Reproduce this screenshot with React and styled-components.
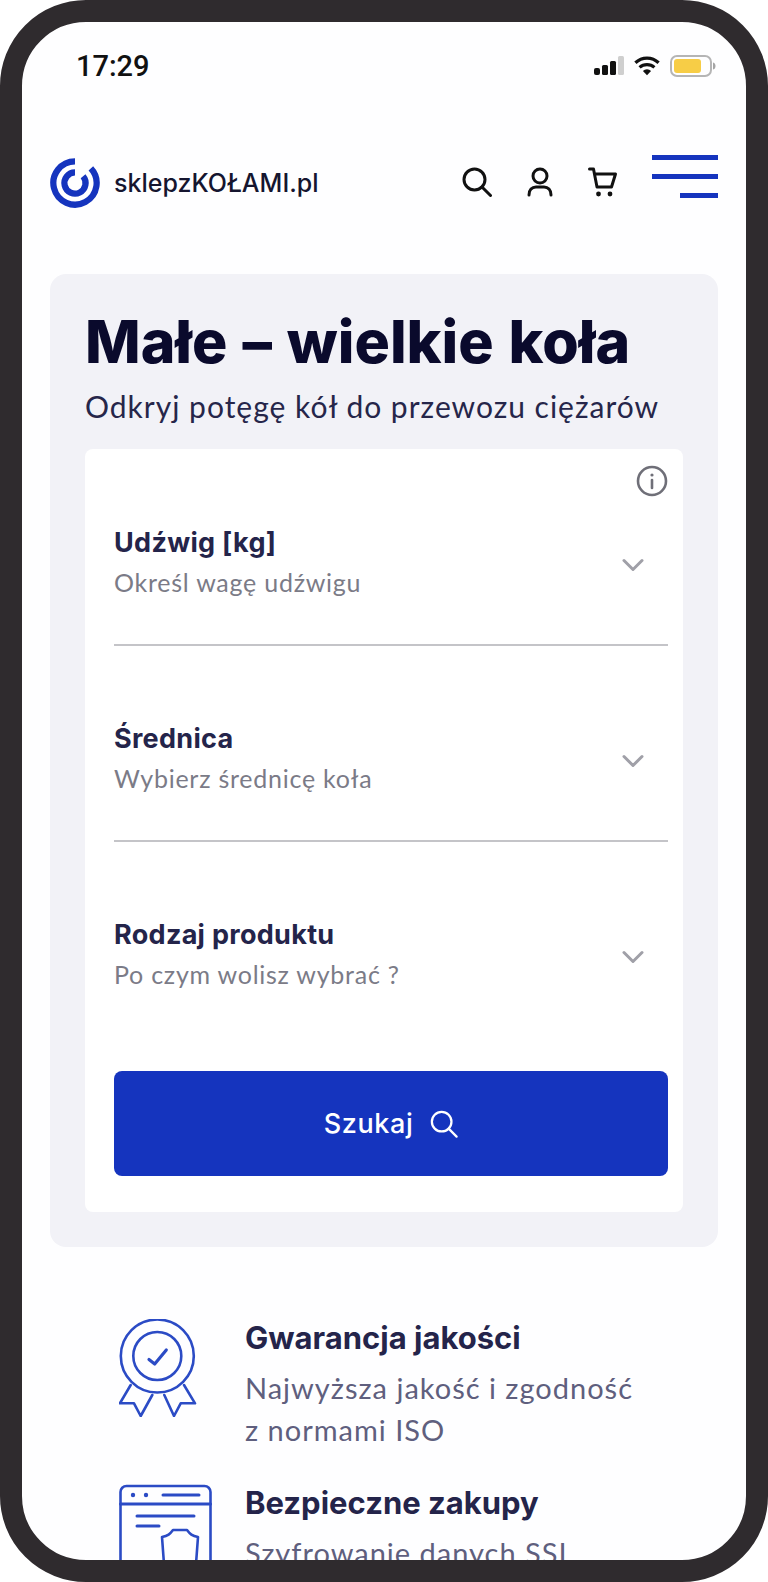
import styled, { createGlobalStyle } from 'styled-components';

const GlobalStyle = createGlobalStyle`
  html, body {
    margin: 0;
    padding: 0;
    background: #fff;
  }
  * {
    box-sizing: border-box;
  }
`;

const Frame = styled.div`
  width: 768px;
  height: 1582px;
  border: 22px solid #2f2b2e;
  border-radius: 86px;
  background: #fefeff;
  overflow: hidden;
  font-family: Inter, "Liberation Sans", sans-serif;
  color: #24244a;
`;

const StatusBar = styled.div`
  height: 88px;
  padding: 22px 30px 0 54px;
  display: flex;
  align-items: flex-start;
  justify-content: space-between;
`;

const Clock = styled.span`
  font-family: Roboto, sans-serif;
  font-size: 29px;
  line-height: 44px;
  font-weight: 500;
  color: #111;
`;

const StatusIcons = styled.div`
  display: flex;
  align-items: center;
  gap: 10px;
  height: 44px;
`;

const Header = styled.header`
  margin-top: 38px;
  height: 70px;
  padding: 0 28px;
  display: flex;
  align-items: center;
`;

const Brand = styled.div`
  display: flex;
  align-items: center;
  gap: 14px;
  font-size: 25px;
  font-weight: 500;
  color: #15152f;
`;

const Tools = styled.div`
  margin-left: auto;
  margin-top: -2px;
  display: flex;
  align-items: center;
  gap: 35px;
`;

const Burger = styled.button`
  margin-left: 34px;
  margin-top: -14px;
  width: 66px;
  padding: 0;
  border: 0;
  background: none;
  display: flex;
  flex-direction: column;
  align-items: flex-end;
  gap: 14px;
`;

const BurgerLine = styled.span`
  display: block;
  height: 5px;
  width: ${p => p.$w}px;
  background: #1534be;
`;

const Hero = styled.section`
  margin: 56px 28px 0;
  padding: 34px 35px 35px;
  background: #f2f2f7;
  border-radius: 16px;
`;

const Title = styled.h1`
  margin: 0;
  font-size: 59px;
  line-height: 68px;
  font-weight: 800;
  word-spacing: 2px;
  color: #0a0a2c;
`;

const Subtitle = styled.p`
  margin: 12px 0 0;
  font-family: Lato, sans-serif;
  font-size: 30px;
  line-height: 36px;
  letter-spacing: 1px;
  color: #26264a;
`;

const Form = styled.div`
  margin-top: 25px;
  padding: 16px 15px 36px 29px;
  background: #fff;
  border-radius: 8px;
`;

const InfoRow = styled.div`
  display: flex;
  justify-content: flex-end;
  height: 32px;
  margin-bottom: 29px;
`;

const Field = styled.div`
  height: ${p => (p.$last ? '119px' : '120px')};
  margin-bottom: ${p => (p.$last ? '34px' : '76px')};
  border-bottom: ${p => (p.$last ? '0' : '2px solid #c4c4c8')};
  display: flex;
  justify-content: space-between;
`;

const FieldTitle = styled.div`
  font-size: 27px;
  line-height: 34px;
  font-weight: 700;
  letter-spacing: 0.3px;
  color: #24244a;
`;

const FieldHint = styled.div`
  margin-top: 5px;
  font-family: Lato, sans-serif;
  font-size: 25px;
  line-height: 34px;
  letter-spacing: 0.75px;
  color: #7b7b87;
`;

const Chevron = styled.div`
  margin: 30px 24px 0 0;
`;

const SearchButton = styled.button`
  width: 100%;
  height: 105px;
  border: 0;
  border-radius: 8px;
  background: #1534be;
  color: #fff;
  display: flex;
  align-items: center;
  justify-content: center;
  gap: 17px;
  font-family: Inter, sans-serif;
  font-size: 27px;
  font-weight: 500;
  letter-spacing: 0.6px;
`;

const Features = styled.section`
  margin-top: 72px;
  padding-left: 97px;
  display: flex;
  flex-direction: column;
  gap: 33px;
`;

const Feature = styled.div`
  display: flex;
  gap: 32px;
`;

const FeatureIcon = styled.div`
  width: 94px;
  flex: none;
`;

const FeatureTitle = styled.h3`
  margin: 0;
  font-size: 31px;
  line-height: 38px;
  font-weight: 700;
  color: #24244a;
`;

const FeatureText = styled.p`
  margin: 10px 0 0;
  font-family: Lato, sans-serif;
  font-size: 29px;
  line-height: 42px;
  letter-spacing: 1px;
  color: #5f5f7e;
`;

const SearchIcon = ({ size = 30, color = '#111', width = 3 }) => (
  <svg width={size} height={size} viewBox="0 0 30 30" fill="none" stroke={color} strokeWidth={width} strokeLinecap="round">
    <circle cx="12.5" cy="12.5" r="10.5" />
    <path d="M20 20l8.5 8.5" />
  </svg>
);

const UserIcon = () => (
  <svg width="26" height="30" viewBox="0 0 26 30" fill="none" stroke="#111" strokeWidth="3" strokeLinecap="round">
    <circle cx="13" cy="9" r="7" />
    <path d="M2 28c0-5 3-8 7-8h8c4 0 7 3 7 8" />
  </svg>
);

const CartIcon = () => (
  <svg width="30" height="30" viewBox="0 0 30 30" fill="none" stroke="#111" strokeWidth="3" strokeLinecap="round" strokeLinejoin="round">
    <path d="M1.5 2h4l3.5 18h14.5l4-13H7" />
    <circle cx="10.5" cy="27" r="2.4" fill="#111" stroke="none" />
    <circle cx="22" cy="27" r="2.4" fill="#111" stroke="none" />
  </svg>
);

const Logo = () => (
  <svg width="50" height="50" viewBox="0 0 52 52" fill="none" stroke="#1534be" strokeWidth="6.5">
    <path d="M26 3.5A22.5 22.5 0 1 0 42.5 10.7" />
    <path d="M26 15A11 11 0 1 0 34.4 18.9" />
  </svg>
);

const Signal = () => (
  <svg width="30" height="20" viewBox="0 0 30 20">
    <rect x="0" y="12" width="6" height="7" rx="2" fill="#111" />
    <rect x="8" y="9" width="6" height="10" rx="1.5" fill="#111" />
    <rect x="16" y="5" width="6" height="14" rx="1.5" fill="#111" />
    <rect x="24" y="0" width="6" height="19" rx="1.5" fill="#cfcfcf" />
  </svg>
);

const Wifi = () => (
  <svg width="26" height="22" viewBox="0 0 28 22" fill="none" stroke="#111" strokeWidth="3.4">
    <path d="M1.5 7.5a18 18 0 0 1 25 0" />
    <path d="M6 12.5a12 12 0 0 1 16 0" />
    <path d="M14 21l-4.4-4.6a6.2 6.2 0 0 1 8.8 0z" fill="#111" stroke="none" />
  </svg>
);

const Battery = () => (
  <svg width="46" height="24" viewBox="0 0 46 24">
    <rect x="1" y="2" width="40" height="20" rx="6" fill="none" stroke="#b5b5b5" strokeWidth="2" />
    <rect x="4" y="5" width="27" height="14" rx="3" fill="#f7cd46" />
    <path d="M43 8.5c2 .5 2.5 2 2.5 3.5s-.5 3-2.5 3.5z" fill="#a5a5a5" />
  </svg>
);

const InfoIcon = () => (
  <svg width="32" height="32" viewBox="0 0 32 32" fill="none" stroke="#6f6f78" strokeWidth="2.6" strokeLinecap="round">
    <circle cx="16" cy="16" r="14" />
    <path d="M16 15v8" />
    <circle cx="16" cy="10" r="1.6" fill="#6f6f78" stroke="none" />
  </svg>
);

const ChevronIcon = () => (
  <svg width="22" height="14" viewBox="0 0 22 14" fill="none" stroke="#a0a0a8" strokeWidth="3" strokeLinecap="round" strokeLinejoin="round">
    <path d="M2 2.5l9 9 9-9" />
  </svg>
);

const MedalIcon = () => (
  <svg width="78" height="98" viewBox="0 0 78 98" fill="none" stroke="#2b4bc5" strokeWidth="2.6" strokeLinejoin="round" strokeLinecap="round">
    <circle cx="38.3" cy="37" r="36.5" />
    <circle cx="38.3" cy="37" r="24" />
    <path d="M30 40.5l5.7 4.5 11.6-14" strokeWidth="3.2" />
    <path d="M11.7 66L.9 84.3H15L21.7 97 33.3 76" />
    <path d="M65 66l11 18.3H61.7L55 97 45.3 76" />
  </svg>
);

const WindowIcon = () => (
  <svg width="93" height="90" viewBox="0 0 93 90" fill="none" stroke="#2b4bc5" strokeWidth="2.6" strokeLinecap="round" strokeLinejoin="round">
    <path d="M1.5 78V8a6 6 0 0 1 6-6h78a6 6 0 0 1 6 6v70" />
    <path d="M1.5 20h90" strokeWidth="3" />
    <circle cx="14" cy="11" r="2.2" fill="#2b4bc5" stroke="none" />
    <circle cx="27" cy="11" r="2.2" fill="#2b4bc5" stroke="none" />
    <path d="M44 11h36" strokeWidth="3" />
    <path d="M18 32h57" strokeWidth="3" />
    <path d="M18 42h22" strokeWidth="3" />
    <path d="M45 80L43 53c6-1 8-3 11-7h14c3 4 5 6 11 7l-2 27" />
  </svg>
);

const fields = [
  { title: 'Udźwig [kg]', hint: 'Określ wagę udźwigu' },
  { title: 'Średnica', hint: 'Wybierz średnicę koła' },
  { title: 'Rodzaj produktu', hint: 'Po czym wolisz wybrać ?', last: true },
];

export default function App() {
  return (
    <Frame>
      <GlobalStyle />
      <StatusBar>
        <Clock>17:29</Clock>
        <StatusIcons>
          <Signal />
          <Wifi />
          <Battery />
        </StatusIcons>
      </StatusBar>
      <Header>
        <Brand>
          <Logo />
          sklepzKOŁAMI.pl
        </Brand>
        <Tools>
          <SearchIcon />
          <UserIcon />
          <CartIcon />
        </Tools>
        <Burger aria-label="Menu">
          <BurgerLine $w={66} />
          <BurgerLine $w={66} />
          <BurgerLine $w={38} />
        </Burger>
      </Header>
      <Hero>
        <Title>Małe – wielkie koła</Title>
        <Subtitle>Odkryj potęgę kół do przewozu ciężarów</Subtitle>
        <Form>
          <InfoRow>
            <InfoIcon />
          </InfoRow>
          {fields.map(f => (
            <Field key={f.title} $last={f.last}>
              <div>
                <FieldTitle>{f.title}</FieldTitle>
                <FieldHint>{f.hint}</FieldHint>
              </div>
              <Chevron>
                <ChevronIcon />
              </Chevron>
            </Field>
          ))}
          <SearchButton>
            Szukaj
            <SearchIcon size={28} color="#fff" width={2.4} />
          </SearchButton>
        </Form>
      </Hero>
      <Features>
        <Feature>
          <FeatureIcon>
            <MedalIcon />
          </FeatureIcon>
          <div>
            <FeatureTitle>Gwarancja jakości</FeatureTitle>
            <FeatureText>
              Najwyższa jakość i zgodność
              <br />
              z normami ISO
            </FeatureText>
          </div>
        </Feature>
        <Feature>
          <FeatureIcon>
            <WindowIcon />
          </FeatureIcon>
          <div>
            <FeatureTitle>Bezpieczne zakupy</FeatureTitle>
            <FeatureText>Szyfrowanie danych SSL</FeatureText>
          </div>
        </Feature>
      </Features>
    </Frame>
  );
}
